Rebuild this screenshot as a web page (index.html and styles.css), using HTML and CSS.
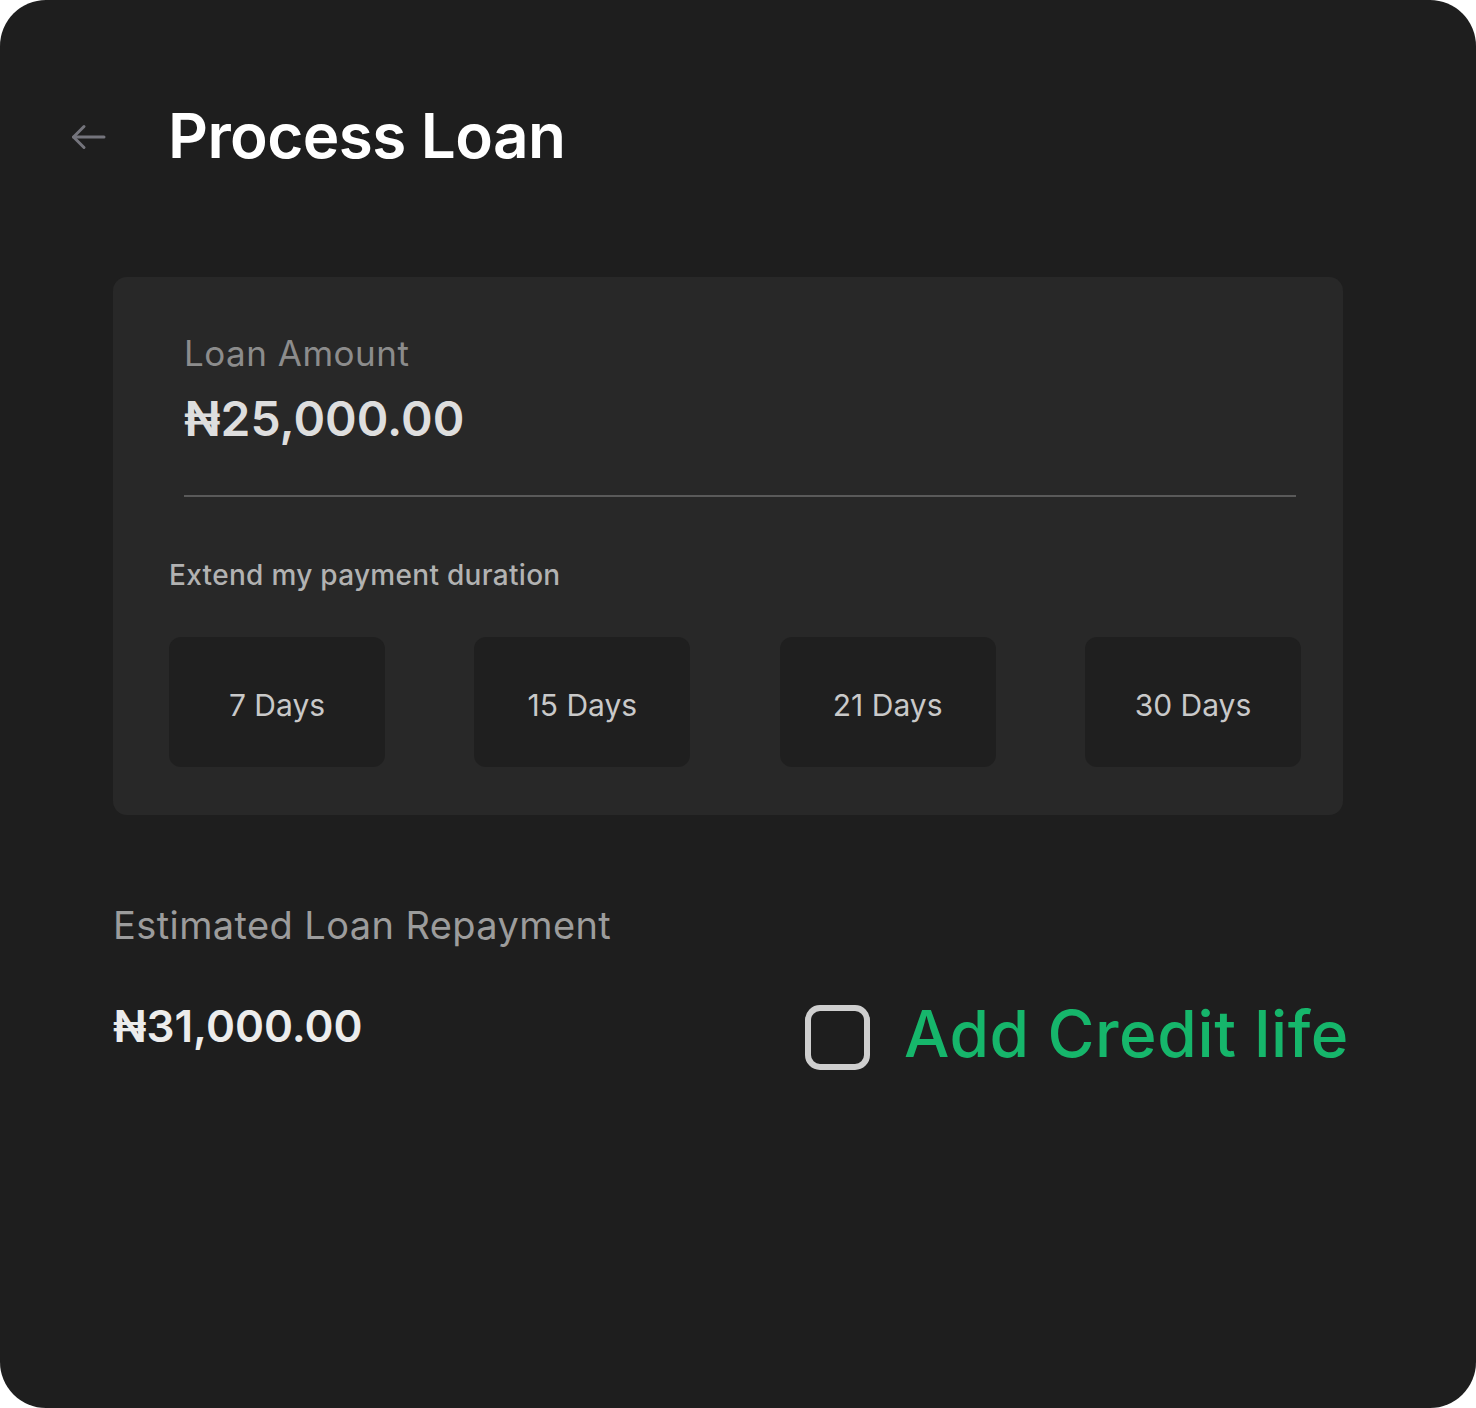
FILE: index.html
```html
<!DOCTYPE html>
<html lang="en">
<head>
    <meta charset="UTF-8">
    <meta name="viewport" content="width=device-width, initial-scale=1.0">
    <title>Process Loan</title>
    <link rel="stylesheet" href="styles.css">
</head>
<body>
    <div class="screen">
        <div class="header">
            <button class="back-btn" aria-label="Back">
                <svg width="36" height="26" viewBox="0 0 36 26" fill="none" stroke="#74747c" stroke-width="3" stroke-linecap="round" stroke-linejoin="round">
                    <path d="M2.5 13 H33"/>
                    <path d="M13 2.5 L2.5 13 L13 23.5"/>
                </svg>
            </button>
            <h1>Process Loan</h1>
        </div>

        <div class="loan-panel">
            <div class="amount-field">
                <div class="field-label">Loan Amount</div>
                <div class="field-value">₦25,000.00</div>
            </div>

            <div class="duration">
                <div class="duration-title">Extend my payment duration</div>
                <div class="duration-options">
                    <button class="day-option">7 Days</button>
                    <button class="day-option">15 Days</button>
                    <button class="day-option">21 Days</button>
                    <button class="day-option">30 Days</button>
                </div>
            </div>
        </div>

        <div class="repayment">
            <div class="repayment-label">Estimated Loan Repayment</div>
            <div class="repayment-row">
                <div class="repayment-value">₦31,000.00</div>
                <label class="credit-life">
                    <span class="checkbox"></span>
                    <span class="credit-text">Add Credit life</span>
                </label>
            </div>
        </div>
    </div>
</body>
</html>
```

FILE: styles.css
```css
* {
    margin: 0;
    padding: 0;
    box-sizing: border-box;
    font-family: "Inter", "Liberation Sans", sans-serif;
}

body {
    background: #ffffff;
}

.screen {
    width: 1476px;
    height: 1408px;
    background: #1e1e1e;
    border-radius: 46px;
    overflow: hidden;
}

.header {
    display: flex;
    align-items: center;
    padding: 96px 0 0 71px;
    height: 176px;
}

.back-btn {
    background: none;
    border: none;
    width: 97px;
    display: flex;
    align-items: center;
    margin-top: 2px;
}

.header h1 {
    color: #ffffff;
    font-size: 62px;
    font-weight: 600;
    letter-spacing: -0.6px;
    line-height: 76px;
}

.loan-panel {
    margin: 101px 0 0 113px;
    width: 1230px;
    height: 538px;
    background: #282828;
    border-radius: 14px;
    padding: 54px 47px 0 56px;
}

.amount-field {
    margin-left: 15px;
    border-bottom: 2px solid #5a5a5a;
    height: 166px;
}

.field-label {
    color: #8c8c8c;
    font-size: 35px;
    letter-spacing: 0.5px;
    line-height: 44px;
}

.field-value {
    color: #dedede;
    font-size: 48px;
    font-weight: 600;
    margin-top: 14px;
    line-height: 60px;
}

.duration {
    margin-top: 60px;
}

.duration-title {
    color: #b2b2b2;
    font-size: 28px;
    font-weight: 500;
    letter-spacing: 0.3px;
    line-height: 36px;
}

.duration-options {
    display: flex;
    justify-content: space-between;
    margin-top: 44px;
    width: 1132px;
}

.day-option {
    width: 216px;
    height: 130px;
    padding-top: 5px;
    background: #1f1f1f;
    border: none;
    border-radius: 12px;
    color: #c9c9c9;
    font-size: 30px;
}

.repayment {
    padding: 86px 0 0 113px;
    width: 1349px;
}

.repayment-label {
    color: #9c9c9c;
    font-size: 38px;
    letter-spacing: 0.4px;
    line-height: 48px;
}

.repayment-row {
    display: flex;
    justify-content: space-between;
    align-items: flex-start;
    margin-top: 49px;
}

.repayment-value {
    color: #ececec;
    font-size: 44px;
    font-weight: 600;
    line-height: 54px;
    margin-top: 1px;
}

.credit-life {
    display: flex;
    align-items: center;
    gap: 34px;
}

.checkbox {
    width: 65px;
    height: 65px;
    border: 6px solid #cfcfcf;
    border-radius: 15px;
}

.credit-text {
    color: #16b66b;
    font-size: 64px;
    font-weight: 500;
    letter-spacing: 0.6px;
    line-height: 72px;
    margin-bottom: 6px;
}
```
